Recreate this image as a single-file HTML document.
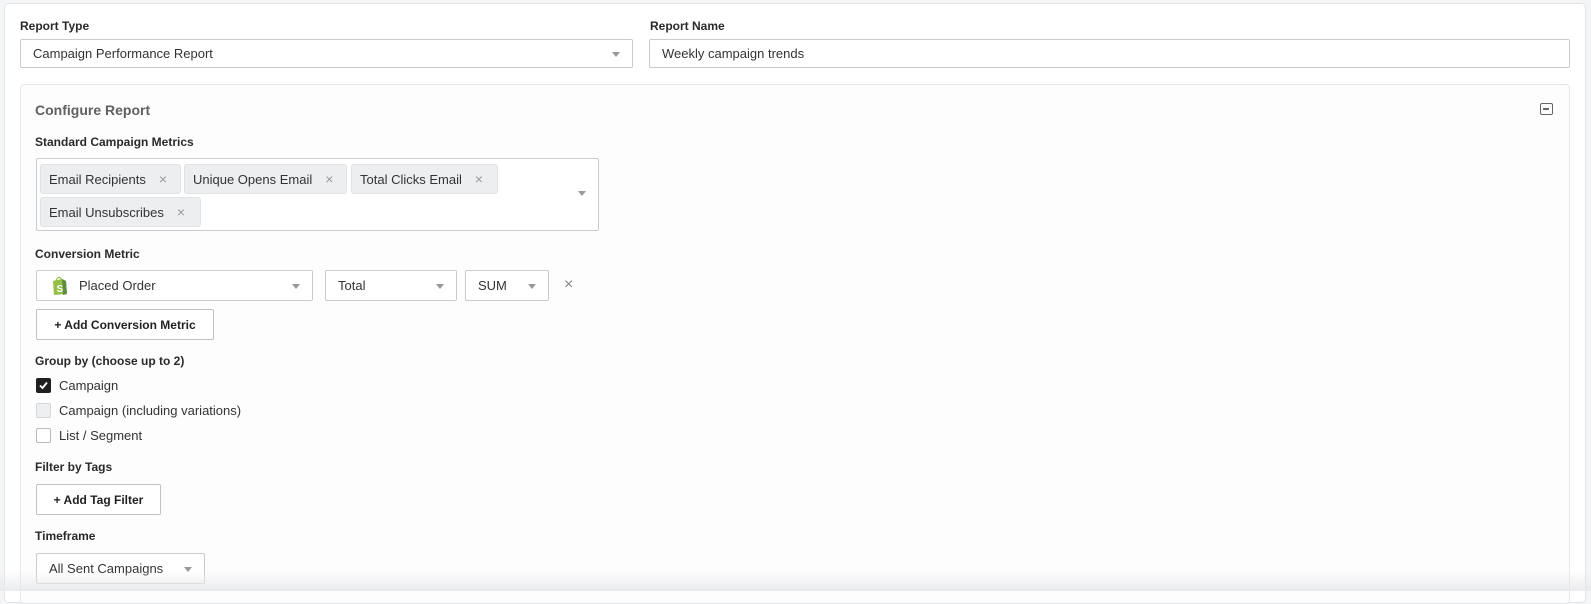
<!DOCTYPE html>
<html><head><style>
*{box-sizing:border-box;margin:0;padding:0}
body{width:1591px;height:591px;overflow:hidden;background:#f4f5f6;font-family:"Liberation Sans",Arial,sans-serif;color:#2b2b2b;position:relative}
.a{position:absolute}
.outer{left:4px;top:3px;width:1582px;height:600px;background:#fff;border:1px solid #e4e5e7;border-radius:5px}
.inner{left:20px;top:84px;width:1550px;height:520px;background:#fdfdfe;border:1px solid #e6e7e9;border-radius:4px}
.lbl{font-size:12px;font-weight:bold;color:#2a2a2a;line-height:14px}
.box{border:1px solid #c9cbce;border-radius:2px;background:#fff;font-size:13px;color:#333;display:flex;align-items:center;padding-left:12px}
.car{position:absolute;right:10px;top:50%;margin-top:-2px;width:0;height:0;border-left:4.5px solid transparent;border-right:4.5px solid transparent;border-top:5px solid #999}
.chip{position:absolute;height:30px;background:#eceef0;border:1px solid #e0e2e5;border-radius:3px;font-size:13px;color:#333;display:flex;align-items:center;padding-left:8px}
.chip span{color:#9a9a9a;font-size:14px;margin-left:13px}
.btn{border:1px solid #bfc1c4;border-radius:2px;background:#fff;font-size:12px;font-weight:bold;color:#222;display:flex;align-items:center;justify-content:center}
.cb{width:15px;height:15px;border:1px solid #b8babd;border-radius:2px;background:#fff}
.cl{font-size:13px;color:#333;line-height:15px}
</style></head><body>
<div class="a outer"></div>
<div class="a lbl" style="left:20px;top:19px">Report Type</div>
<div class="a box" style="left:20px;top:39px;width:613px;height:29px">Campaign Performance Report<div class="car" style="right:12px"></div></div>
<div class="a lbl" style="left:650px;top:19px">Report Name</div>
<div class="a box" style="left:649px;top:39px;width:921px;height:29px">Weekly campaign trends</div>
<div class="a inner"></div>
<div class="a" style="left:35px;top:102px;font-size:14px;font-weight:bold;color:#606060">Configure Report</div>
<div class="a" style="left:1540px;top:103px;width:13px;height:12px;border:1.5px solid #666;border-radius:2px"><div style="position:absolute;left:2px;top:4px;width:6px;height:1.5px;background:#666"></div></div>
<div class="a lbl" style="left:35px;top:135px">Standard Campaign Metrics</div>
<div class="a" style="left:36px;top:158px;width:563px;height:73px;border:1px solid #c9cbce;border-radius:2px;background:#fff"><div class="car" style="right:12px;top:34px"></div></div>
<div class="chip" style="left:40px;top:164px;width:141px">Email Recipients<span>×</span></div>
<div class="chip" style="left:184px;top:164px;width:163px">Unique Opens Email<span>×</span></div>
<div class="chip" style="left:351px;top:164px;width:147px">Total Clicks Email<span>×</span></div>
<div class="chip" style="left:40px;top:197px;width:161px">Email Unsubscribes<span>×</span></div>
<div class="a lbl" style="left:35px;top:247px">Conversion Metric</div>
<div class="a box" style="left:36px;top:270px;width:277px;height:31px;padding-left:14px">
<svg width="17" height="20" viewBox="0 0 17 20"><path d="M2 5 L11 3 L15 5 L16 18 L3 19 Z" fill="#95bf47"/><path d="M11 3 L15 5 L16 18 L12 19 Z" fill="#5e8e3e"/><path d="M5 5 Q6 1 8.5 1.5 Q10.5 2 10.5 5" fill="none" stroke="#95bf47" stroke-width="1.2"/><text x="5.5" y="16" font-size="10" font-weight="bold" fill="#fff" font-family="Liberation Sans">S</text></svg>
<span style="margin-left:11px">Placed Order</span><div class="car" style="right:12px"></div></div>
<div class="a box" style="left:325px;top:270px;width:132px;height:31px">Total<div class="car" style="right:12px"></div></div>
<div class="a box" style="left:465px;top:270px;width:84px;height:31px">SUM<div class="car" style="right:12px"></div></div>
<div class="a" style="left:564px;top:276px;font-size:16px;color:#888">×</div>
<div class="a btn" style="left:36px;top:309px;width:178px;height:31px">+ Add Conversion Metric</div>
<div class="a lbl" style="left:35px;top:354px">Group by (choose up to 2)</div>
<div class="a cb" style="left:36px;top:378px;background:#1f1f1f;border-color:#1f1f1f"><svg width="13" height="13" viewBox="0 0 13 13" style="position:absolute;left:0;top:0"><path d="M3 6.5 L5.5 9 L10 3.5" stroke="#fff" stroke-width="1.8" fill="none"/></svg></div>
<div class="a cl" style="left:59px;top:378px">Campaign</div>
<div class="a cb" style="left:36px;top:403px;background:#eeeff0;border-color:#d5d7d9"></div>
<div class="a cl" style="left:59px;top:403px">Campaign (including variations)</div>
<div class="a cb" style="left:36px;top:428px"></div>
<div class="a cl" style="left:59px;top:428px">List / Segment</div>
<div class="a lbl" style="left:35px;top:460px">Filter by Tags</div>
<div class="a btn" style="left:36px;top:484px;width:125px;height:31px">+ Add Tag Filter</div>
<div class="a lbl" style="left:35px;top:529px">Timeframe</div>
<div class="a box" style="left:36px;top:553px;width:169px;height:31px">All Sent Campaigns<div class="car" style="right:12px"></div></div>
<div class="a" style="left:0;top:571px;width:1591px;height:20px;background:linear-gradient(rgba(240,240,242,0),rgba(232,233,235,0.9))"></div>
</body></html>
